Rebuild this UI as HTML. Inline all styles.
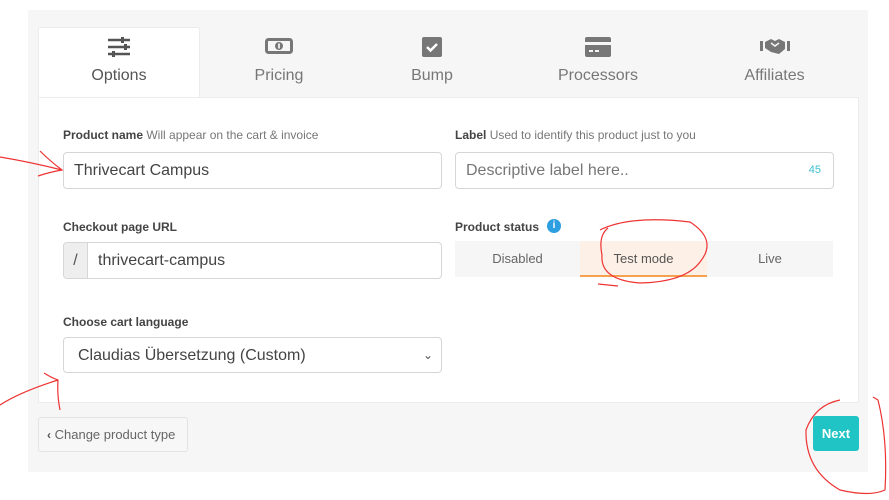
<!DOCTYPE html>
<html><head><meta charset="utf-8"><style>
*{box-sizing:border-box;margin:0;padding:0}
body{width:889px;height:500px;background:#fff;font-family:"Liberation Sans",sans-serif;position:relative;overflow:hidden;color:#555}
.abs{position:absolute}
.bg{left:28px;top:10px;width:840px;height:462px;background:#f6f6f6}
.tab{top:27px;height:70px;text-align:center;font-size:16px;color:#777}
.tab .lab{position:absolute;left:0;right:0;top:40px}
.tab svg{position:absolute;left:50%;transform:translateX(-50%);top:10px}
.panel{left:38px;top:97px;width:821px;height:306px;background:#fff;border:1px solid #ececec}
.lbl{font-size:12px;font-weight:bold;color:#444}
.lbl span{font-weight:normal;color:#777}
.inp{border:1px solid #d6d6d6;border-radius:4px;background:#fff;font-size:16px;color:#444;padding-left:10px;line-height:35px}
</style></head><body>
<div class="abs bg"></div>
<div class="abs" style="left:38px;top:27px;width:162px;height:71px;background:#fff;border:1px solid #ececec;border-bottom:none;border-radius:3px 3px 0 0"></div>
<div class="abs tab" style="left:38px;width:162px;color:#555">
<svg width="24" height="20" viewBox="0 0 24 20"><g stroke="#555" stroke-width="2.4"><line x1="1" y1="3" x2="23" y2="3"/><line x1="1" y1="10" x2="23" y2="10"/><line x1="1" y1="17" x2="23" y2="17"/></g><g fill="#555"><rect x="14" y="0" width="3" height="6"/><rect x="17" y="7" width="3" height="6"/><rect x="5" y="14" width="3" height="6"/></g></svg>
<div class="lab">Options</div></div>
<div class="abs tab" style="left:200px;width:158px">
<svg width="28" height="18" viewBox="0 0 28 18"><rect x="1.5" y="2.5" width="25" height="13" rx="2" fill="none" stroke="#777" stroke-width="3"/><circle cx="14" cy="9" r="4" fill="#777"/><rect x="13.2" y="6.5" width="1.6" height="5" fill="#fff"/></svg>
<div class="lab">Pricing</div></div>
<div class="abs tab" style="left:358px;width:148px">
<svg width="20" height="20" viewBox="0 0 20 20"><rect width="20" height="20" rx="2" fill="#777"/><path d="M5 10l3.5 3.5L15 7" stroke="#fff" stroke-width="2.5" fill="none"/></svg>
<div class="lab">Bump</div></div>
<div class="abs tab" style="left:506px;width:184px">
<svg width="26" height="20" viewBox="0 0 26 20"><rect width="26" height="20" rx="2" fill="#777"/><rect x="0" y="5" width="26" height="3" fill="#f6f6f6"/><rect x="4" y="13" width="4" height="2" fill="#f6f6f6"/><rect x="10" y="13" width="4" height="2" fill="#f6f6f6"/></svg>
<div class="lab">Processors</div></div>
<div class="abs tab" style="left:690px;width:169px">
<svg width="30" height="18" viewBox="0 0 30 18"><rect x="0" y="4" width="3" height="10" fill="#777"/><rect x="27" y="4" width="3" height="10" fill="#777"/><path d="M5 5l6-3 4 2 4-2 6 3v7l-6 5-8-2-6-4z" fill="#777"/><path d="M11 6l4 3 4-3" stroke="#f6f6f6" stroke-width="1.5" fill="none"/></svg>
<div class="lab">Affiliates</div></div>
<div class="abs panel"></div>
<div class="abs lbl" style="left:63px;top:128px">Product name <span>Will appear on the cart &amp; invoice</span></div>
<div class="abs inp" style="left:63px;top:152px;width:379px;height:37px">Thrivecart Campus</div>
<div class="abs lbl" style="left:455px;top:128px">Label <span>Used to identify this product just to you</span></div>
<div class="abs inp" style="left:455px;top:152px;width:379px;height:37px;color:#777">Descriptive label here..<span style="position:absolute;right:12px;font-size:11px;color:#3bbfcf">45</span></div>
<div class="abs lbl" style="left:63px;top:220px">Checkout page URL</div>
<div class="abs inp" style="left:63px;top:242px;width:379px;height:37px;padding-left:0;overflow:hidden"><span style="display:inline-block;width:24px;height:37px;background:#eee;border-right:1px solid #d6d6d6;text-align:center;color:#555">/</span><span style="padding-left:10px">thrivecart-campus</span></div>
<div class="abs lbl" style="left:455px;top:220px">Product status</div>
<div class="abs" style="left:547px;top:219px;width:14px;height:14px;border-radius:7px;background:#2d9ee0;color:#fff;font-weight:bold;font-size:10px;text-align:center;line-height:14px">i</div>
<div class="abs" style="left:455px;top:241px;width:378px;height:36px;background:#f6f6f6;font-size:13px;color:#666;display:flex;line-height:36px;text-align:center">
<div style="width:125px">Disabled</div><div style="width:127px;background:#fdf0e6;border-bottom:2px solid #f5a150;color:#555">Test mode</div><div style="width:126px">Live</div></div>
<div class="abs lbl" style="left:63px;top:315px">Choose cart language</div>
<div class="abs inp" style="left:63px;top:337px;width:379px;height:36px;padding-left:14px">Claudias Übersetzung (Custom)<span style="position:absolute;right:8px;top:0;font-size:12px;color:#555">&#8964;</span></div>
<div class="abs" style="left:38px;top:417px;width:150px;height:35px;border:1px solid #e3e3e3;border-radius:3px;background:#f7f7f7;font-size:13px;color:#666;line-height:33px;padding-left:8px"><b style="font-size:12px;color:#555">&#8249;</b> Change product type</div>
<div class="abs" style="left:813px;top:416px;width:46px;height:35px;background:#20c4c4;border-radius:3px;color:#fff;font-size:13px;font-weight:bold;text-align:center;line-height:35px">Next</div>
<svg class="abs" style="left:0;top:0" width="889" height="500" fill="none" stroke="#e33" stroke-width="1.2">
<path d="M0 157 Q30 162 62 170 M40 151 Q50 161 62 170 Q50 172 38 176"/>
<path d="M0 405 Q20 392 58 380 M44 373 Q52 378 58 380 Q57 395 60 410"/>
<path d="M600 230 Q630 215 690 222 Q718 240 700 262 Q685 282 640 283 Q600 280 602 255 Q598 236 608 228 M598 284 L618 286"/>
<path d="M840 400 Q815 405 806 430 Q805 470 840 490 Q870 497 885 490 Q888 440 878 400 L873 397"/>
</svg>
</body></html>
